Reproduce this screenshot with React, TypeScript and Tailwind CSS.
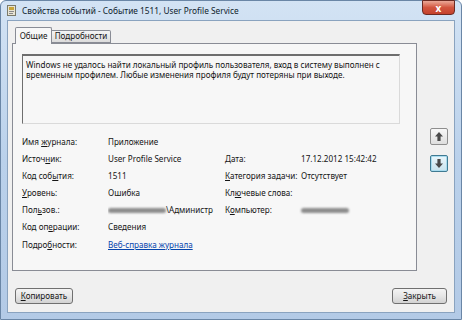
const font = { fontFamily: '"Noto Sans", "Open Sans", sans-serif' };

function Row({ label, value, rlabel, rvalue }: { label: React.ReactNode; value?: React.ReactNode; rlabel?: React.ReactNode; rvalue?: React.ReactNode }) {
  return (
    <div className="flex items-center h-[17.2px] whitespace-nowrap">
      <div className="w-[86px] shrink-0">{label}</div>
      <div className="w-[117px] shrink-0 overflow-hidden flex items-center">{value}</div>
      <div className="w-[76px] shrink-0">{rlabel}</div>
      <div className="flex items-center">{rvalue}</div>
    </div>
  );
}

function Blur({ w }: { w: number }) {
  return <span className="inline-block h-[5px] rounded-full bg-[#8d8d8d] blur-[1.2px] shrink-0" style={{ width: w }} />;
}

function Arrow({ down }: { down?: boolean }) {
  return (
    <svg width="8" height="9" viewBox="0 0 8 9" className={down ? "rotate-180" : ""}>
      <polygon points="4,0 8,4.5 5.6,4.5 5.6,9 2.4,9 2.4,4.5 0,4.5" fill="#4a4a4a" />
    </svg>
  );
}

export default function App() {
  return (
    <div className="w-[462px] h-[320px] bg-white overflow-hidden text-[8.1px] text-[#151515]" style={font}>
      <div className="w-full h-full flex flex-col rounded-t-[6px] border border-[#6a86a6] bg-gradient-to-b from-[#d3e3f4] via-[#bad1eb] to-[#b3cae6] px-[6px] pb-[6px]">
        {/* title bar */}
        <div className="h-[19px] flex items-start shrink-0">
          <svg width="9" height="11" viewBox="0 0 9 11" className="mt-[4px] shrink-0">
            <rect x="0.5" y="0.5" width="8" height="10" fill="#e8e4d4" stroke="#7a7a6a" />
            <rect x="2" y="2" width="5" height="3" fill="#c9a53a" />
            <rect x="2" y="6" width="5" height="1" fill="#8a8a8a" />
            <rect x="2" y="8" width="4" height="1" fill="#8a8a8a" />
          </svg>
          <div className="ml-[6px] mt-[4px] text-[8.3px] text-[#0f1c2c] leading-[11px]">
            Свойства событий - Событие 1511, User Profile Service
          </div>
          <div className="ml-auto -mt-px w-[33px] h-[15px] rounded-b-[4px] border border-[#6b2a22] bg-gradient-to-b from-[#eaa898] via-[#d2553f] to-[#c4412b] flex items-center justify-center text-white text-[10px] font-bold leading-none">
            x
          </div>
        </div>

        {/* client */}
        <div className="flex-1 bg-[#f0f0f0] border border-[#8aa3bf] flex flex-col">
          <div className="flex pl-[4px] pt-[6px]">
            {/* tab control */}
            <div className="w-[405px] flex flex-col">
              <div className="flex items-end h-[16px] pl-[3px] relative z-10">
                <div className="w-[37px] h-[17px] -mb-px border border-[#898c95] border-b-0 bg-[#f7f7f7] rounded-t-[2px] flex items-center justify-center">
                  Общие
                </div>
                <div className="w-[59px] h-[13px] border border-l-0 border-[#898c95] bg-gradient-to-b from-[#f4f4f4] to-[#dcdcdc] rounded-tr-[2px] flex items-center justify-center">
                  Подробности
                </div>
              </div>
              <div className="h-[228px] border border-[#898c95] bg-[#f7f7f7] flex flex-col pl-[9px] pt-[10px]">
                <div className="w-[378px] h-[70px] border-t-2 border-l border-t-[#6e6e6e] border-l-[#6e6e6e] border-r border-b border-r-[#dadada] border-b-[#dadada] px-[3px] pt-[4px] leading-[9.5px] whitespace-nowrap">
                  <div>Windows не удалось найти локальный профиль пользователя, вход в систему выполнен с</div>
                  <div>временным профилем. Любые изменения профиля будут потеряны при выходе.</div>
                </div>
                <div className="mt-[9px] flex flex-col">
                  <Row label={<>Имя <u>ж</u>урнала:</>} value="Приложение" />
                  <Row label={<>Источ<u>н</u>ик:</>} value="User Profile Service" rlabel={<><u>Д</u>ата:</>} rvalue="17.12.2012 15:42:42" />
                  <Row label={<>Код соб<u>ы</u>тия:</>} value="1511" rlabel={<><u>К</u>атегория задачи:</>} rvalue="Отсутствует" />
                  <Row label={<><u>У</u>ровень:</>} value="Ошибка" rlabel={<>Кл<u>ю</u>чевые слова:</>} />
                  <Row label={<>Пол<u>ь</u>зов.:</>} value={<><Blur w={58} /><span>\Администр</span></>} rlabel={<>К<u>о</u>мпьютер:</>} rvalue={<Blur w={48} />} />
                  <Row label={<>Код оп<u>е</u>рации:</>} value="Сведения" />
                  <Row label={<>Подро<u>б</u>ности:</>} value={<span className="text-[#0645ad] underline">Веб-справка журнала</span>} />
                </div>
              </div>
            </div>
            {/* arrows */}
            <div className="ml-[13px] mt-[101px] flex flex-col gap-[10px]">
              <div className="w-[18px] h-[17px] rounded-[2px] border border-[#8e8e8e] bg-gradient-to-b from-[#f8f8f8] to-[#dedede] flex items-center justify-center">
                <Arrow />
              </div>
              <div className="w-[18px] h-[17px] rounded-[2px] border border-[#3f7a92] bg-gradient-to-b from-[#eaf6fb] to-[#c8e3ee] flex items-center justify-center shadow-[inset_0_0_0_1px_#a9dcef]">
                <Arrow down />
              </div>
            </div>
          </div>

          {/* buttons */}
          <div className="flex justify-between mt-[17px] pl-[7px] pr-[7px]">
            <div className="w-[58px] h-[16px] rounded-[3px] border border-[#707070] bg-gradient-to-b from-[#f4f4f4] via-[#e6e6e6] to-[#d2d2d2] flex items-center justify-center">
              <span><u>К</u>опировать</span>
            </div>
            <div className="w-[55px] h-[16px] rounded-[3px] border border-[#707070] bg-gradient-to-b from-[#f4f4f4] via-[#e6e6e6] to-[#d2d2d2] flex items-center justify-center">
              <span><u>З</u>акрыть</span>
            </div>
          </div>
        </div>
      </div>
    </div>
  );
}
